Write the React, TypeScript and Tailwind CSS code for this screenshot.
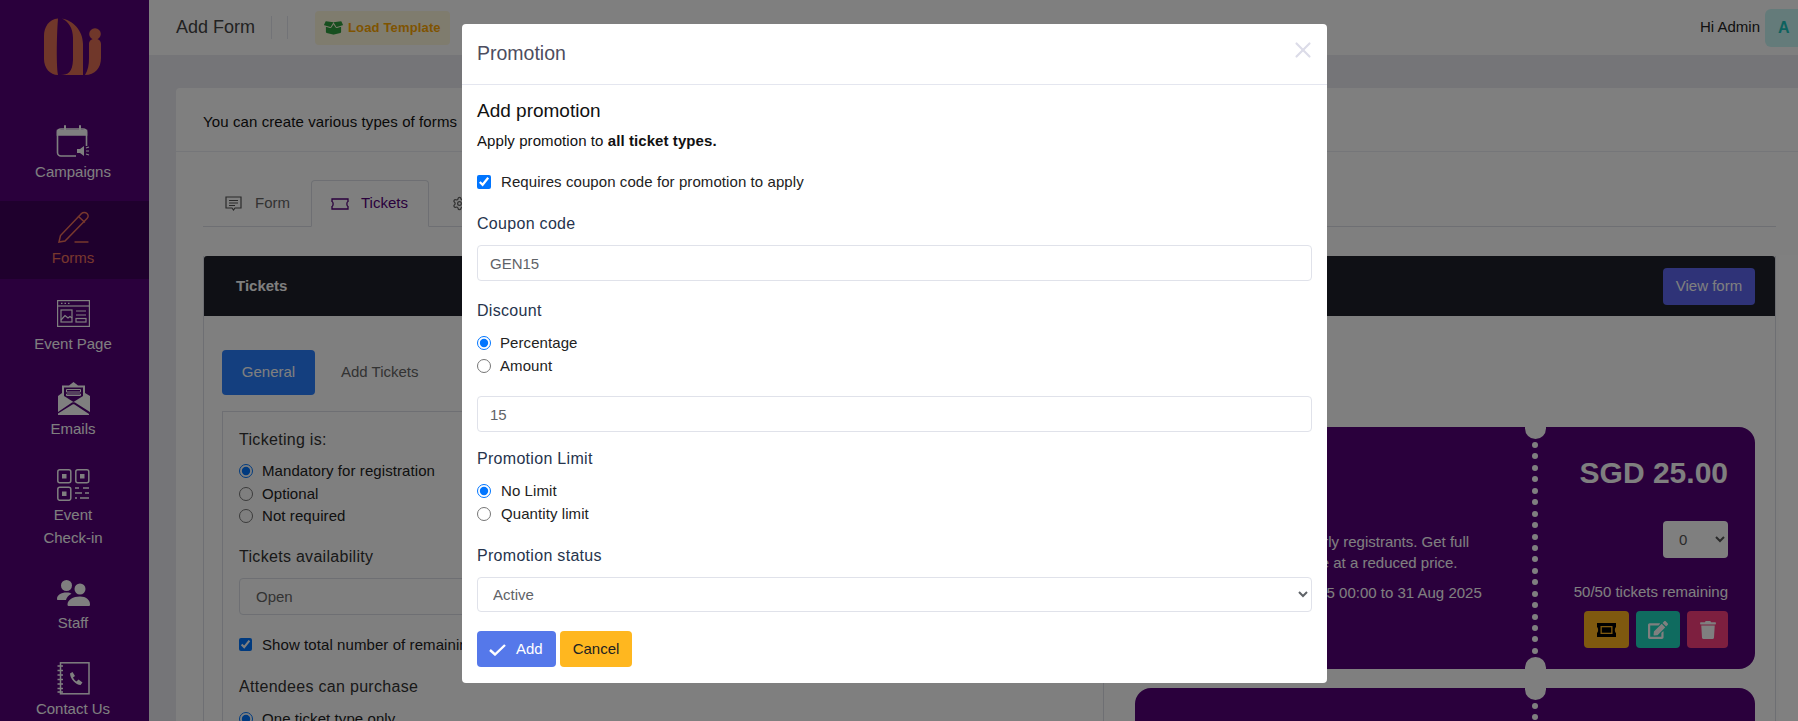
import type { ReactNode } from "react";
import { FaBoxOpen, FaEdit, FaTrash } from "react-icons/fa";
import { Settings, X } from "lucide-react";

function Logo() {
    return (
        <svg width="90" height="75" viewBox="0 0 90 75" fill="#e06f55">
            <path d="M28 8.500C19 9 14 17 14 26V49C14 58 20 65 28 65C26 52 27 20 28 8.500Z" />
            <path d="M32 8.500C42 10 53 20 53 34V65H31C38 65 42.500 62 43 50V28C43 18 38 11 32 8.500Z" />
            <circle cx="65" cy="24" r="5.800" />
            <path d="M59 34C59 27 71 27 71 34V48C71 58 65 65 55 65C58 60 59 55 59 48Z" />
        </svg>
    );
}

function CampaignIcon() {
    return (
        <svg width="34" height="33" viewBox="0 0 34 33" fill="none" stroke="#fff" strokeWidth="1.600">
            <path d="M20 31H5C3 31 1.500 29.500 1.500 27.500V7C1.500 5 3 4 5 4H27C29 4 30.500 5 30.500 7V21" />
            <path d="M1.500 10H30.500V5.500H1.500Z" fill="#fff" />
            <path d="M9 1V7M24 1V7" strokeLinecap="round" strokeWidth="2" />
            <path d="M21 24H24L28 21V31L24 28H21Z" fill="#fff" stroke="none" />
            <path d="M30 23L33 22M30 26H33M30 29L33 30" strokeWidth="1.200" />
        </svg>
    );
}

function PencilIcon() {
    return (
        <svg width="33" height="33" viewBox="0 0 33 33" fill="none" stroke="#f0705a" strokeWidth="1.500" strokeLinecap="round">
            <path d="M2 31L3.500 24.500L24.500 2.500C26 1 28.500 1 30 2.500C31.500 4 31.500 6 30 7.500L8 30Z" />
            <path d="M21.500 5.500L27.500 11" />
            <path d="M18 31H31" strokeWidth="1.300" />
        </svg>
    );
}

function PageIcon() {
    return (
        <svg width="33" height="27" viewBox="0 0 33 27" fill="none" stroke="#fff" strokeWidth="1.200">
            <rect x="0.600" y="0.600" width="31.800" height="25.800" />
            <path d="M1 6H32" />
            <path d="M4 3.300H5.500M7.500 3.300H9M11 3.300H12.500" strokeWidth="1.300" />
            <rect x="4" y="10" width="11" height="12" />
            <path d="M4 20L8 15.500L11 18L13 16.500L15 18" />
            <path d="M19 11H29M19 15H29" />
            <rect x="19" y="18.500" width="10" height="3.500" />
        </svg>
    );
}

function MailIcon() {
    return (
        <svg width="33" height="33" viewBox="0 0 33 33" fill="#fff">
            <path d="M16.500 0L21 3.500H28V11L33 14V30L18 20.500C17 20 16 20 15 20.500L1 30V14L5 11V3.500H12Z" />
            <path d="M1 31.500L15.500 22.500C16.500 22 17 22 17.500 22.500L32 32V33H1Z" />
            <path d="M7 5.500H26V14L16.500 20L7 14Z" fill="#540079" />
            <path d="M9.500 7.500H23.500V10H9.500ZM9.500 12H23.500V13.500H9.500Z" fill="none" stroke="#fff" strokeWidth="1" />
        </svg>
    );
}

function QrIcon() {
    return (
        <svg width="33" height="32" viewBox="0 0 33 32" fill="none" stroke="#fff" strokeWidth="1.500">
            <rect x="0.800" y="0.800" width="13" height="13" rx="2" />
            <rect x="18.800" y="0.800" width="13" height="13" rx="2" />
            <rect x="0.800" y="18.300" width="13" height="13" rx="2" />
            <rect x="5" y="5" width="4.500" height="4.500" fill="#fff" stroke="none" />
            <rect x="23" y="5" width="4.500" height="4.500" fill="#fff" stroke="none" />
            <rect x="5" y="22.500" width="4.500" height="4.500" fill="#fff" stroke="none" />
            <path d="M18 19H22M26 19H32M18 24H25M28 24H32M18 29H20M23 29H32" strokeWidth="1.300" />
        </svg>
    );
}

function StaffIcon() {
    return (
        <svg width="33" height="26" viewBox="0 0 33 26" fill="#fff">
            <circle cx="9.500" cy="5.500" r="5.500" />
            <circle cx="23" cy="9" r="5.500" />
            <path d="M0 19C0 15 4 12.500 9.500 12.500C12 12.500 13.500 13 14.500 13.800C11.500 15.500 9.500 17.500 9 20H1C0.300 20 0 19.700 0 19Z" />
            <path d="M10.500 24.500C10.500 20 16 16.500 23 16.500C29 16.500 33 20 33 24.500C33 25.500 32.500 26 31.500 26H12C11 26 10.500 25.500 10.500 24.500Z" />
        </svg>
    );
}

function ContactIcon() {
    return (
        <svg width="33" height="33" viewBox="0 0 33 33" fill="none" stroke="#fff" strokeWidth="1.500">
            <rect x="3.500" y="0.800" width="28.500" height="31" />
            <path d="M0.500 4H6M0.500 8.500H6M0.500 13H6M0.500 17.500H6M0.500 22H6M0.500 26.500H6M0.500 30H6" strokeWidth="1.300" />
            <path d="M13 11.500L15.500 10L18 14L16 15.500C16.500 17 18 18.500 19.500 19.500L21.500 17.500L25.500 20.500L23.500 23C19 23 13 17 13 11.500Z" fill="#fff" stroke="none" />
        </svg>
    );
}

function TicketOutline({ color }: { color: string }) {
    return (
        <svg width="18" height="12" viewBox="0 0 18 12" fill="none" stroke={color} strokeWidth="1.300">
            <path d="M1 1H17V3.500C15.500 4 15.500 8 17 8.500V11H1V8.500C2.500 8 2.500 4 1 3.500Z" />
        </svg>
    );
}

function SolidTicket() {
    return (
        <svg width="21" height="14" viewBox="0 0 21 14" fill="#000">
            <path d="M1 0H20V4C18.500 5 18.500 9 20 10V14H1V10C2.500 9 2.500 5 1 4Z" />
            <rect x="4.500" y="3" width="12" height="8" fill="#ffb21f" />
            <rect x="5.800" y="4.300" width="9.400" height="5.400" />
        </svg>
    );
}

const navItems: { label: ReactNode; icon: ReactNode; top: string; active?: boolean }[] = [
    { label: "Campaigns", icon: <CampaignIcon />, top: "mt-0" },
    { label: "Forms", icon: <PencilIcon />, top: "mt-[8px]", active: true },
    { label: "Event Page", icon: <PageIcon />, top: "mt-[8px]" },
    { label: "Emails", icon: <MailIcon />, top: "mt-[7px]" },
    { label: <>Event<br />Check-in</>, icon: <QrIcon />, top: "mt-[8px]" },
    { label: "Staff", icon: <StaffIcon />, top: "mt-[7px]" },
    { label: "Contact Us", icon: <ContactIcon />, top: "mt-[8px]" },
];

function Sidebar() {
    return (
        <aside className="w-[149px] shrink-0 bg-[#540079]">
            <div className="h-[115px] pt-[10px] pl-[30px]">
                <Logo />
            </div>
            {navItems.map((item, i) => (
                <div
                    key={i}
                    className={`${item.top} flex flex-col items-center pt-[10px] pb-[10px] pr-[3px] text-[15px] leading-[23px] text-center ${item.active ? "bg-[#3e005a] text-[#f0705a]" : "text-white"}`}
                >
                    <div className="h-[33px] flex items-center justify-center">{item.icon}</div>
                    <div className="mt-[2px]">{item.label}</div>
                </div>
            ))}
        </aside>
    );
}

function Topbar() {
    return (
        <header className="h-[55px] shrink-0 bg-white flex items-center pl-[27px]">
            <span className="text-[18px] text-[#444]">Add Form</span>
            <span className="ml-[16px] w-px h-[23px] bg-[#e4e6ef]" />
            <span className="ml-[15px] w-px h-[23px] bg-[#e4e6ef]" />
            <button className="ml-[27px] h-[34px] w-[135px] rounded-[4px] bg-[#fff8dd] flex items-center pl-[9px] gap-[5px] text-[13px] tracking-[0.150px] font-bold text-[#ffa800]">
                <FaBoxOpen className="w-[19px] h-[16px] text-[#2e9e3e]" />
                Load Template
            </button>
            <span className="ml-auto text-[15px] text-[#222]">Hi Admin</span>
            <div className="ml-[5px] w-[33px] h-[38px] rounded-l-[6px] bg-[#c9f7f5] flex items-center pl-[13px] text-[16px] font-bold text-[#1bc5bd]">
                A
            </div>
        </header>
    );
}

function RadioRow({ label, checked, gap = "ml-[9px]" }: { label: string; checked?: boolean; gap?: string }) {
    return (
        <label className="flex items-center h-[22.500px] text-[15px] tracking-[0.080px] text-[#222]">
            <input type="radio" defaultChecked={checked} className="m-0 w-[14px] h-[14px]" />
            <span className={gap}>{label}</span>
        </label>
    );
}

function Ticket({ children }: { children?: ReactNode }) {
    return (
        <div className="relative h-[242px] shrink-0 rounded-[16px] bg-[#540079] text-white overflow-hidden">
            <div className="absolute left-[389.500px] top-[-10px] w-[21px] h-[22px] rounded-full bg-white" />
            <div className="absolute left-[389.500px] bottom-[-10px] w-[21px] h-[22px] rounded-full bg-white" />
            <div className="absolute left-[397px] top-[15px] h-[212px] flex flex-col justify-between">
                {Array.from({ length: 19 }).map((_, i) => (
                    <span key={i} className="block w-[6px] h-[6px] rounded-full bg-white" />
                ))}
            </div>
            {children}
        </div>
    );
}

function Background() {
    return (
        <div className="flex-1 min-w-0 flex flex-col bg-[#ebebf0]">
            <Topbar />
            <div className="flex-1 min-h-0 pl-[27px] pt-[33px]">
                <div className="bg-white rounded-tl-[4px]">
                    <div className="h-[64px] border-b border-[#ebedf3] pl-[27px] pt-[6px] flex items-center text-[15px] tracking-[0.100px] text-[#111]">
                        You can create various types of forms
                    </div>
                    <div className="pl-[27px] pr-[22px] pt-[28px]">
                        <div className="flex h-[47px] border-b border-[#dcdfe6] pl-[2px] text-[15px]">
                            <div className="w-[106px] flex items-center pl-[20px] gap-[13px] text-[#666]">
                                <svg width="17" height="15" viewBox="0 0 17 15" fill="none" stroke="#555" strokeWidth="1.200">
                                    <path d="M1 1H16V12H10L8.500 14L7 12H1Z" />
                                    <path d="M4 4.500H13M4 7H13M4 9.500H10" />
                                </svg>
                                Form
                            </div>
                            <div className="w-[118px] h-[47px] flex items-center pl-[19px] gap-[12px] border border-b-white border-[#dcdfe6] rounded-t-[4px] bg-white text-[#540079]">
                                <TicketOutline color="#540079" />
                                Tickets
                            </div>
                            <div className="flex items-center pl-[23px] text-[#666]">
                                <Settings className="w-[15px] h-[15px]" />
                            </div>
                        </div>
                        <div className="mt-[29px] border-x border-[#dcdfe6]">
                            <div className="h-[60px] bg-[#1e202a] rounded-t-[3px] flex items-center justify-between pl-[32px] pr-[20px]">
                                <span className="text-[15px] font-bold text-white">Tickets</span>
                                <button className="w-[92px] h-[37px] rounded-[4px] bg-[#5e66f0] text-[15px] text-white">View form</button>
                            </div>
                            <div className="pl-[18px] pt-[34px]">
                                <div className="flex h-[45px] text-[15px]">
                                    <div className="w-[93px] rounded-[4px] bg-[#287eff] text-white flex items-center justify-center">General</div>
                                    <div className="ml-[26px] flex items-center text-[#666]">Add Tickets</div>
                                </div>
                                <div className="mt-[16px] flex">
                                    <div className="w-[882px] h-[400px] shrink-0 border border-[#dcdfe6] pl-[16px] pt-[16px] text-[#222]">
                                        <div className="text-[16px] leading-[24px] tracking-[0.300px] text-[#333]">Ticketing is:</div>
                                        <div className="mt-[8px]">
                                            <RadioRow label="Mandatory for registration" checked />
                                            <RadioRow label="Optional" />
                                            <RadioRow label="Not required" />
                                        </div>
                                        <div className="mt-[17px] text-[16px] leading-[24px] tracking-[0.300px] text-[#333]">Tickets availability</div>
                                        <select className="mt-[9px] block w-[840px] h-[37px] rounded-[4px] border border-[#dcdfe6] pl-[12px] text-[15px] text-[#666] bg-white">
                                            <option>Open</option>
                                        </select>
                                        <label className="mt-[19px] flex items-center text-[15px] tracking-[0.080px] leading-[22px]">
                                            <input type="checkbox" defaultChecked className="m-0 w-[13px] h-[13px]" />
                                            <span className="ml-[10px]">Show total number of remaining tickets</span>
                                        </label>
                                        <div className="mt-[19px] text-[16px] leading-[24px] tracking-[0.300px] text-[#333]">Attendees can purchase</div>
                                        <div className="mt-[9px]">
                                            <RadioRow label="One ticket type only" checked />
                                        </div>
                                    </div>
                                    <div className="flex-1 min-w-0 pl-[31px] pr-[20px] pt-[16px] flex flex-col gap-[19px]">
                                        <Ticket>
                                            <div className="absolute left-[4px] top-[104px] text-[15px] leading-[21px]">
                                                Limited-time discount for early registrants. Get full<br />
                                                access to the full conference at a reduced price.
                                                <div className="mt-[9px]">Sale period: from 01 Jul 2025 00:00 to 31 Aug 2025</div>
                                            </div>
                                            <div className="absolute right-[27px] top-[27px] flex flex-col items-end">
                                                <div className="text-[30px] font-bold leading-[38px]">SGD 25.00</div>
                                                <select defaultValue="0" className="mt-[29px] w-[65px] h-[37px] rounded-[4px] bg-white pl-[12px] text-[15px] text-[#555]">
                                                    <option>0</option>
                                                </select>
                                                <div className="mt-[23px] text-[15px] leading-[22px]">50/50 tickets remaining</div>
                                                <div className="mt-[8px] flex gap-[7px]">
                                                    <button className="w-[45px] h-[37px] rounded-[4px] bg-[#ffb21f] flex items-center justify-center"><SolidTicket /></button>
                                                    <button className="w-[44px] h-[37px] rounded-[4px] bg-[#1ed6be] flex items-center justify-center"><FaEdit className="w-[20px] h-[18px] text-white" /></button>
                                                    <button className="w-[41px] h-[37px] rounded-[4px] bg-[#fa3e7e] flex items-center justify-center"><FaTrash className="w-[16px] h-[18px] text-white" /></button>
                                                </div>
                                            </div>
                                        </Ticket>
                                        <Ticket />
                                    </div>
                                </div>
                            </div>
                        </div>
                    </div>
                </div>
            </div>
        </div>
    );
}

const labelClass = "text-[16px] leading-[24px] tracking-[0.300px] text-[#26344d]";
const inputClass = "block w-[835px] h-[36px] rounded-[4px] border border-[#e0e2ea] pl-[12px] text-[15px] text-[#5f6368] outline-none";

function PromotionModal() {
    return (
        <div className="absolute inset-0 bg-black/50">
            <div className="ml-[462px] mt-[24px] w-[865px] h-[659px] rounded-[4px] bg-white">
                <div className="h-[61px] border-b border-[#e4e6ef] px-[15px] flex items-center justify-between">
                    <span className="text-[19.500px] text-[#4d4d60]">Promotion</span>
                    <X strokeWidth={2} className="w-[26px] h-[26px] -mr-[4px] mb-[8px] text-[#dcdce8]" />
                </div>
                <div className="px-[15px] pt-[14px]">
                    <div className="text-[19px] leading-[24px] text-[#111]">Add promotion</div>
                    <div className="mt-[7px] text-[15px] tracking-[0.080px] leading-[22px] text-[#111]">
                        Apply promotion to <b>all ticket types.</b>
                    </div>
                    <label className="mt-[19px] flex items-center text-[15px] tracking-[0.080px] leading-[22px] text-[#222]">
                        <input type="checkbox" defaultChecked className="m-0 w-[14px] h-[14px]" />
                        <span className="ml-[10px]">Requires coupon code for promotion to apply</span>
                    </label>
                    <div className={`mt-[19px] ${labelClass}`}>Coupon code</div>
                    <input defaultValue="GEN15" className={`mt-[9px] ${inputClass}`} />
                    <div className={`mt-[18px] ${labelClass}`}>Discount</div>
                    <div className="mt-[9px]">
                        <RadioRow label="Percentage" checked gap="ml-[9px]" />
                        <RadioRow label="Amount" gap="ml-[9px]" />
                    </div>
                    <input defaultValue="15" className={`mt-[19px] ${inputClass}`} />
                    <div className={`mt-[15px] ${labelClass}`}>Promotion Limit</div>
                    <div className="mt-[9px]">
                        <RadioRow label="No Limit" checked gap="ml-[10px]" />
                        <RadioRow label="Quantity limit" gap="ml-[10px]" />
                    </div>
                    <div className={`mt-[19px] ${labelClass}`}>Promotion status</div>
                    <select className="mt-[9px] block w-[835px] h-[35px] rounded-[4px] border border-[#e0e2ea] pl-[11px] text-[15px] text-[#5f6368] bg-white">
                        <option>Active</option>
                    </select>
                    <div className="mt-[19px] flex gap-[4px]">
                        <button className="w-[79px] h-[36px] rounded-[4px] bg-[#5578ea] text-white text-[15px] flex items-center pl-[12px] gap-[10px]">
                            <svg width="17" height="13" viewBox="0 0 17 13" fill="none" stroke="#fff" strokeWidth="2.400">
                                <path d="M1 7L6 11.500L16 2" />
                            </svg>
                            Add
                        </button>
                        <button className="w-[72px] h-[36px] rounded-[4px] bg-[#ffb71f] text-[#222] text-[15px]">Cancel</button>
                    </div>
                </div>
            </div>
        </div>
    );
}

export default function App() {
    return (
        <div className="relative flex w-[1798px] h-[721px] overflow-hidden font-['Liberation_Sans',Arial,sans-serif]">
            <Sidebar />
            <Background />
            <PromotionModal />
        </div>
    );
}
